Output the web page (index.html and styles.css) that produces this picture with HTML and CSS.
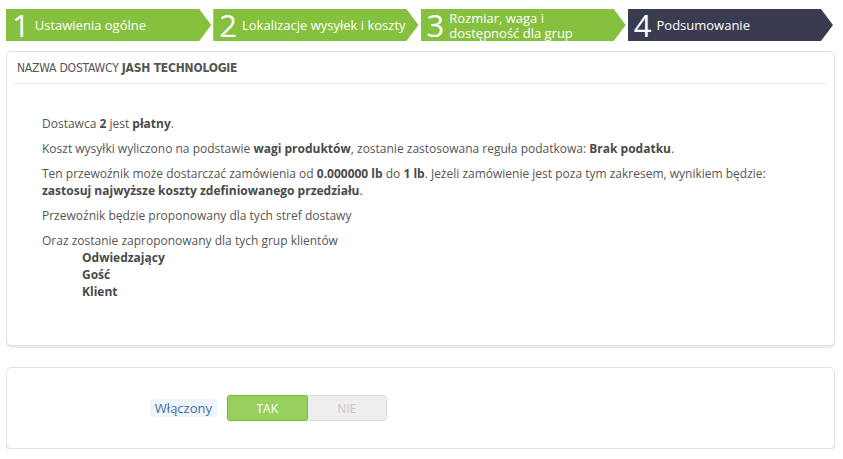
FILE: index.html
```html
<!DOCTYPE html>
<html lang="pl">
<head>
<meta charset="utf-8">
<title>Podsumowanie</title>
<link rel="stylesheet" href="styles.css">
</head>
<body>
<div class="page">
  <ol class="steps">
    <li class="step done"><span class="num">1</span><span class="label">Ustawienia ogólne</span></li>
    <li class="step done"><span class="num">2</span><span class="label">Lokalizacje wysyłek i koszty</span></li>
    <li class="step done"><span class="num">3</span><span class="label two-line"><span>Rozmiar, waga i</span><span>dostępność dla grup</span></span></li>
    <li class="step current"><span class="num">4</span><span class="label">Podsumowanie</span></li>
  </ol>

  <section class="panel summary">
    <h3 class="panel-heading">NAZWA DOSTAWCY <strong>JASH TECHNOLOGIE</strong></h3>
    <div class="panel-body">
      <p>Dostawca <strong>2</strong> jest <strong>płatny</strong>.</p>
      <p>Koszt wysyłki wyliczono na podstawie <strong>wagi produktów</strong>, zostanie zastosowana reguła podatkowa: <strong>Brak podatku</strong>.</p>
      <p>Ten przewoźnik może dostarczać zamówienia od <strong>0.000000 lb</strong> do <strong>1 lb</strong>. Jeżeli zamówienie jest poza tym zakresem, wynikiem będzie: <strong>zastosuj najwyższe koszty zdefiniowanego przedziału</strong>.</p>
      <p>Przewoźnik będzie proponowany dla tych stref dostawy</p>
      <div class="groups">
        <p>Oraz zostanie zaproponowany dla tych grup klientów</p>
        <ul>
          <li>Odwiedzający</li>
          <li>Gość</li>
          <li>Klient</li>
        </ul>
      </div>
    </div>
  </section>

  <section class="panel active-panel">
    <div class="form-row">
      <div class="label-col"><span class="field-label">Włączony</span></div>
      <div class="switch">
        <span class="opt on">TAK</span>
        <span class="opt off">NIE</span>
      </div>
    </div>
  </section>
</div>
</body>
</html>
```

FILE: styles.css
```css
* { box-sizing: border-box; }
html, body { margin: 0; padding: 0; background: #fff; }
body {
  font-family: "Open Sans", "Liberation Sans", sans-serif;
  font-size: 12px;
  color: #555;
}
.page { padding: 9px 8px 0 6px; }

.steps {
  list-style: none;
  margin: 0;
  padding: 0;
  display: flex;
  gap: 2px;
  width: 827px;
}
.step {
  flex: 1;
  height: 32px;
  display: flex;
  align-items: center;
  padding-left: 6px;
  color: #fff;
  clip-path: polygon(0 0, calc(100% - 12px) 0, 100% 50%, calc(100% - 12px) 100%, 0 100%);
}
.step.done { background: #85c13e; }
.step.current { background: #393c51; }
.step .num {
  font-size: 31px;
  font-weight: 400;
  line-height: 32px;
  margin-right: 5px;
  min-width: 15px;
}
.step .label {
  font-size: 13px;
  line-height: 15px;
  white-space: nowrap;
}
.step .label.two-line {
  display: flex;
  flex-direction: column;
  margin-top: 1px;
}
.step .label.two-line span { display: block; height: 15px; line-height: 15px; }

.panel {
  border: 1px solid #e2e2e2;
  border-radius: 5px;
  box-shadow: 0 2px 0 rgba(0,0,0,0.08);
  background: #fff;
  width: 829px;
}
.summary { margin-top: 10px; height: 295px; }
.panel-heading {
  margin: 0 6px;
  height: 32px;
  line-height: 32px;
  padding-left: 4px;
  border-bottom: 1px solid #eee;
  font-family: "DejaVu Sans", sans-serif;
  font-stretch: condensed;
  font-size: 12px;
  font-weight: normal;
  color: #555;
  letter-spacing: -0.2px;
}
.panel-heading strong { font-weight: bold; }
.panel-body { padding: 31px 35px 0 35px; }
.panel-body p { margin: 0 0 8px; line-height: 17px; }
.panel-body strong { color: #4a4a4a; }
.groups p { margin: 0; }
.groups ul {
  list-style: none;
  margin: 0;
  padding: 0 0 0 40px;
  font-weight: bold;
  color: #4a4a4a;
  line-height: 17px;
}

.active-panel { margin-top: 21px; height: 82px; display: flex; align-items: center; }
.form-row { display: flex; align-items: center; width: 100%; }
.label-col { width: 220px; display: flex; justify-content: flex-end; padding-right: 10px; }
.field-label {
  background: #eef5fa;
  color: #3f6e9f;
  font-size: 13px;
  line-height: 18px;
  padding: 0 5px;
  border-radius: 2px;
}
.switch {
  display: flex;
  width: 160px;
  height: 26px;
  border-radius: 3px;
  background: #eee;
  border: 1px solid #dcdcdc;
}
.opt {
  flex: 1;
  display: flex;
  align-items: center;
  justify-content: center;
  font-size: 12px;
}
.opt.on {
  background: #98d05e;
  border: 1px solid #78bb3a;
  border-radius: 3px;
  margin: -1px 0 -1px -1px;
  color: #fff;
}
.opt.off { color: #c5c5c5; }
```
